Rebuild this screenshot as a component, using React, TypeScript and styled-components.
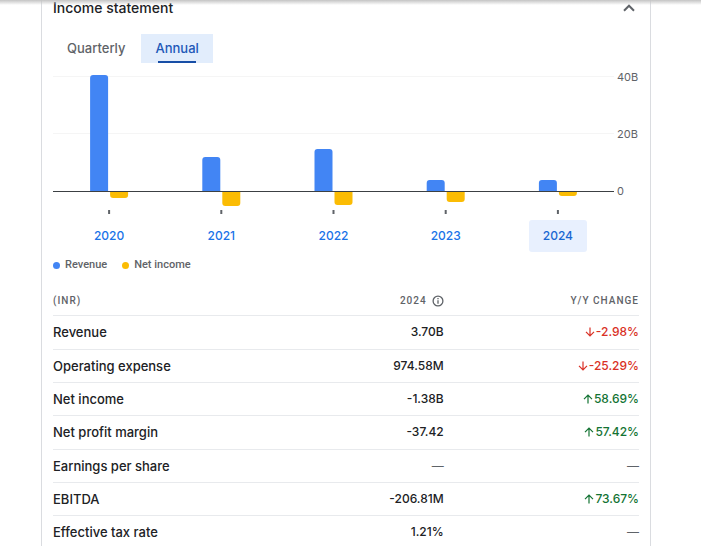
import React, { useState } from 'react';
import styled, { createGlobalStyle } from 'styled-components';

const sans = `Inter, "Open Sans", sans-serif`;
const label = `Roboto, "Liberation Sans", sans-serif`;

const GlobalStyle = createGlobalStyle`
  *, *::before, *::after { box-sizing: border-box; }
  body { margin: 0; background: #fff; color: #202124; font-family: ${sans}; }
  button { border: 0; padding: 0; background: none; font: inherit; cursor: pointer; }
`;

const Viewport = styled.div`
  height: 100vh;
  overflow: hidden;
`;

const TopShadow = styled.div`
  position: absolute;
  inset: 0 0 auto;
  height: 5px;
  background: linear-gradient(#c4c4c4, rgba(255, 255, 255, 0));
`;

const Card = styled.section`
  margin: 0 50px 0 41px;
  padding: 0 11px;
  min-height: 100vh;
  border: solid #dadce0;
  border-width: 0 1px;
`;

const Header = styled.header`
  display: flex;
  align-items: center;
  justify-content: space-between;
  height: 16px;
`;

const Title = styled.h2`
  margin: 0;
  font-size: 14px;
  font-weight: 500;
  line-height: 16px;
`;

const Collapse = styled.button`
  display: flex;
  margin-right: 2px;
`;

const Tabs = styled.div`
  display: flex;
  gap: 2px;
  margin-top: 18px;
`;

const Tab = styled.button<{ $active: boolean }>`
  display: flex;
  flex-direction: column;
  justify-content: space-between;
  align-items: center;
  height: 29px;
  padding: 6px 14px 0;
  font-size: 13px;
  font-weight: 500;
  line-height: 16px;
  color: ${p => (p.$active ? '#2158b8' : '#5f6368')};
  background: ${p => (p.$active ? '#e2edfc' : 'transparent')};
  &::after {
    content: '';
    width: 38px;
    height: 2px;
    background: ${p => (p.$active ? '#174ea6' : 'transparent')};
  }
`;

const Plot = styled.svg`
  display: block;
  width: calc(100% - 25px);
  height: 148px;
  margin-top: 7px;
  overflow: visible;
`;

const AxisLabel = styled.text`
  font-family: ${sans};
  font-size: 11px;
  fill: #5f6368;
`;

const Years = styled.div`
  display: grid;
  grid-template-columns: repeat(5, 1fr);
  justify-items: center;
  margin: 2px 25px 0 0;
`;

const Year = styled.button<{ $active: boolean }>`
  width: 58px;
  height: 32px;
  padding-bottom: 2px;
  border-radius: 3px;
  font-size: 12px;
  font-weight: 500;
  color: ${p => (p.$active ? '#1967d2' : '#1a73e8')};
  background: ${p => (p.$active ? '#e8f0fe' : 'transparent')};
`;

const Legend = styled.ul`
  display: flex;
  gap: 15px;
  margin: 5px 0 0;
  padding: 0;
  list-style: none;
`;

const LegendItem = styled.li<{ $color: string }>`
  display: flex;
  align-items: center;
  gap: 5px;
  height: 16px;
  font: 500 11px/16px ${label};
  color: #5f6368;
  &::before {
    content: '';
    width: 7px;
    height: 7px;
    border-radius: 50%;
    background: ${p => p.$color};
  }
`;

const Table = styled.table`
  width: 100%;
  margin-top: 13px;
  table-layout: fixed;
  border-collapse: separate;
  border-spacing: 0;
`;

const HeadCell = styled.th<{ $end?: boolean }>`
  height: 30px;
  padding: 0;
  border-bottom: 1px solid #e8eaed;
  font: 500 10px/16px ${label};
  letter-spacing: 1px;
  color: #5f6368;
  text-align: ${p => (p.$end ? 'right' : 'left')};
`;

const HeadGroup = styled.span`
  display: flex;
  align-items: center;
  justify-content: flex-end;
  gap: 5px;
`;

const Row = styled.tr`
  height: 33px;
  &:nth-child(3n + 1) { height: 34px; }
`;

const RowLabel = styled.th`
  padding: 0 0 1px;
  border-bottom: 1px solid #e8eaed;
  text-align: left;
  font-size: 13px;
  font-weight: 500;
  line-height: 16px;
`;

const tones = { up: '#137333', down: '#d93025', none: '#5f6368', plain: '#202124' };
type Tone = keyof typeof tones;

const Value = styled.td<{ $tone: Tone }>`
  padding: 0 0 1px;
  border-bottom: 1px solid #e8eaed;
  text-align: right;
  font-size: 12px;
  font-weight: 500;
  line-height: 16px;
  color: ${p => tones[p.$tone]};
`;

const Change = styled.span`
  display: flex;
  align-items: center;
  justify-content: flex-end;
  gap: 1px;
`;

const chart = [
  { year: '2020', revenue: 116, income: 7 },
  { year: '2021', revenue: 34, income: 15 },
  { year: '2022', revenue: 42, income: 14 },
  { year: '2023', revenue: 11, income: 11 },
  { year: '2024', revenue: 11, income: 5 },
];

const rows: { name: string; value: string; change: string; tone: Tone }[] = [
  { name: 'Revenue', value: '3.70B', change: '-2.98%', tone: 'down' },
  { name: 'Operating expense', value: '974.58M', change: '-25.29%', tone: 'down' },
  { name: 'Net income', value: '-1.38B', change: '58.69%', tone: 'up' },
  { name: 'Net profit margin', value: '-37.42', change: '57.42%', tone: 'up' },
  { name: 'Earnings per share', value: '—', change: '—', tone: 'none' },
  { name: 'EBITDA', value: '-206.81M', change: '73.67%', tone: 'up' },
  { name: 'Effective tax rate', value: '1.21%', change: '—', tone: 'none' },
];

const ZERO = 121;

const Arrow = ({ up }: { up: boolean }) => (
  <svg width="10" height="10" viewBox="0 0 10 10" fill="none" stroke="currentColor" strokeWidth="1.2" aria-hidden="true">
    <path d={up ? 'M5 9.5V1.2M1 5.2L5 1.2l4 4' : 'M5 .5v8.3M1 4.8l4 4 4-4'} />
  </svg>
);

const bar = (h: number, x: number, up: boolean) =>
  up
    ? `M${x} ${ZERO}v${3 - h}q0-3 3-3h12q3 0 3 3v${h - 3}z`
    : `M${x} ${ZERO}v${h - 3}q0 3 3 3h12q3 0 3-3v${3 - h}z`;

function Chart() {
  return (
    <Plot role="img" aria-label="Revenue and net income by year">
      {[{ y: 7, text: '40B' }, { y: 64, text: '20B' }, { y: 121, text: '0' }].map(t => (
        <g key={t.text}>
          {t.y !== ZERO && <rect y={t.y - 1} width="100%" height="1" fill="#f5f5f5" />}
          <svg x="100%" overflow="visible">
            <AxisLabel x="3" y={t.y + 4}>{t.text}</AxisLabel>
          </svg>
        </g>
      ))}
      {chart.map((d, i) => (
        <svg key={d.year} x={`${10 + i * 20}%`} overflow="visible">
          <path d={bar(d.revenue, -19, true)} fill="#4285f4" />
          <path d={bar(d.income, 1, false)} fill="#fbbc04" />
          <rect x="-1" y="140" width="2" height="4" fill="#5f6368" />
        </svg>
      ))}
      <rect y={ZERO} width="100%" height="1" fill="#3c4043" />
    </Plot>
  );
}

export default function App() {
  const [period, setPeriod] = useState('Annual');
  const [year, setYear] = useState('2024');
  return (
    <Viewport>
      <GlobalStyle />
      <Card>
        <Header>
          <Title>Income statement</Title>
          <Collapse aria-label="Collapse" aria-expanded="true">
            <svg width="16" height="16" viewBox="0 0 16 16" fill="none" stroke="#5f6368" strokeWidth="2">
              <path d="M3 10.7L8 5.7l5 5" />
            </svg>
          </Collapse>
        </Header>
        <Tabs role="tablist">
          {['Quarterly', 'Annual'].map(t => (
            <Tab key={t} role="tab" aria-selected={t === period} $active={t === period} onClick={() => setPeriod(t)}>
              {t}
            </Tab>
          ))}
        </Tabs>
        <Chart />
        <Years>
          {chart.map(d => (
            <Year key={d.year} $active={d.year === year} onClick={() => setYear(d.year)}>{d.year}</Year>
          ))}
        </Years>
        <Legend>
          <LegendItem $color="#4285f4">Revenue</LegendItem>
          <LegendItem $color="#fbbc04">Net income</LegendItem>
        </Legend>
        <Table>
          <thead>
            <tr>
              <HeadCell scope="col">(INR)</HeadCell>
              <HeadCell scope="col" $end>
                <HeadGroup>
                  2024
                  <svg width="12" height="12" viewBox="0 0 12 12" fill="none" stroke="#5f6368" strokeWidth="1.3" aria-hidden="true">
                    <circle cx="6" cy="6" r="4.9" />
                    <path d="M6 5.3v3.5M6 3.1v1.2" />
                  </svg>
                </HeadGroup>
              </HeadCell>
              <HeadCell scope="col" $end>Y/Y CHANGE</HeadCell>
            </tr>
          </thead>
          <tbody>
            {rows.map(r => (
              <Row key={r.name}>
                <RowLabel scope="row">{r.name}</RowLabel>
                <Value $tone={r.value === '—' ? 'none' : 'plain'}>{r.value}</Value>
                <Value $tone={r.tone}>
                  <Change>
                    {r.tone !== 'none' && <Arrow up={r.tone === 'up'} />}
                    {r.change}
                  </Change>
                </Value>
              </Row>
            ))}
          </tbody>
        </Table>
      </Card>
      <TopShadow />
    </Viewport>
  );
}
